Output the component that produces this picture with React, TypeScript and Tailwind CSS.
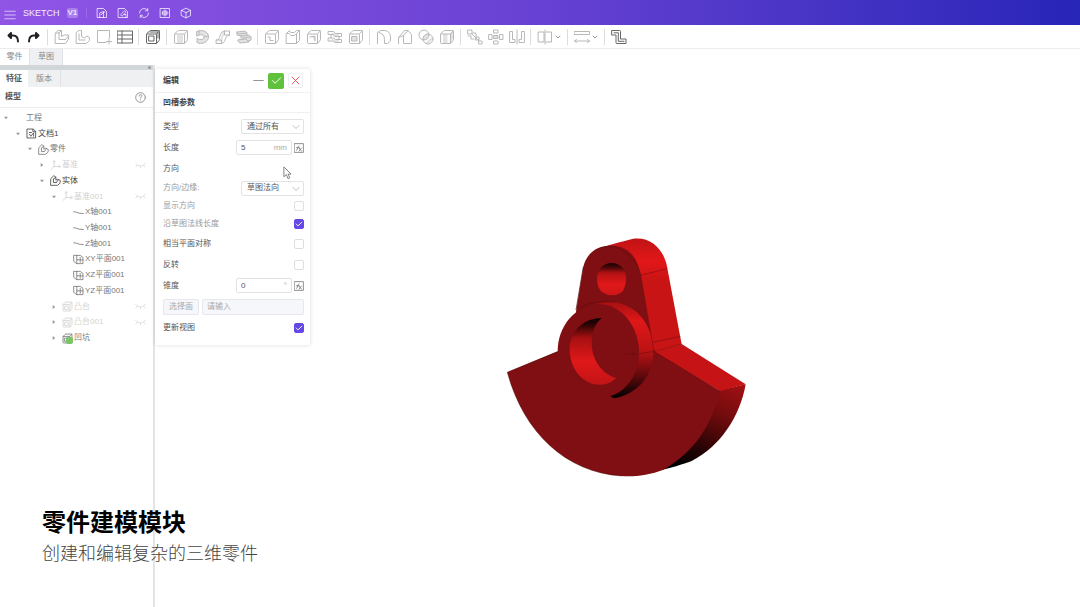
import React, { useState } from 'react';

type IconProps = {
  d: string;
  fill?: string;
  className?: string;
  width?: number;
};

const Icon: React.FC<IconProps> = ({
  d,
  fill,
  className = 'size-4',
  width = 1,
}) => (
  <svg
    viewBox="0 0 16 16"
    className={`shrink-0 ${className}`}
    fill="none"
    stroke="currentColor"
    strokeWidth={width}
    strokeLinecap="round"
    strokeLinejoin="round"
    aria-hidden="true"
  >
    {fill && <path d={fill} fill="currentColor" stroke="none" opacity="0.4" />}
    <path d={d} />
  </svg>
);

type Tool = {
  name: string;
  d: string;
  fill?: string;
  dark?: boolean;
  menu?: boolean;
  width?: number;
};

const cube =
  'M1.500 5.500q0-1 1-1.500l2-2q.500-.500 1-.500h8q1 0 1 1v8q0 .500-.500 1l-2 2.500q-.500.500-1 .500h-8.500q-1 0-1-1zM1.800 5h9q.700 0 .700.700v8.500M11.300 5l3-3.200';

const toolGroups: Tool[][] = [
  [
    {
      name: '新建实体',
      d: 'M1.500 4l2.500-2.500h3.500v6l3-1.500h4v4l-3 4.500h-10zM1.500 4h3.500l2.500-2.500M5 4v6.500h6.500M11.500 10.500l3-3.500',
    },
    {
      name: '新建零件',
      d: 'M1.500 3.500l2-2h3v6l3 1.500 2.500-2 2.500 1.500v3l-3 3h-10zM4 5v6h6',
    },
    { name: '新建草图', d: 'M10 13.500H1.500v-12h12V9M10.500 12.500h5M13 10v5' },
    {
      name: '表格',
      d: 'M.500 2h15v12h-15zM.500 6h15M.500 10h15M5 2v12',
      dark: true,
    },
  ],
  [
    {
      name: '包围盒',
      d: `${cube}M4 7h5v5H4zM5 3h8v6`,
      dark: true,
    },
  ],
  [
    { name: '拉伸', d: cube, fill: 'M4 6h6v8H4z' },
    {
      name: '旋转',
      d: 'M3 2.500C10-.500 15 4 14.500 8.500S8 16 3 13.500v-4c4 2 7 1 7-1.500S7 5 3 7zM5 1.500v4M14 7l-4 1',
      fill: 'M3 2.500C10-.500 15 4 14.500 8.500S8 16 3 13.500v-4c4 2 7 1 7-1.500S7 5 3 7z',
    },
    {
      name: '扫掠',
      d: 'M1.500 11c5 0 2-7.500 7.500-9h5.500v4.500c-6 0-2.500 7-8 8h-5zM9.500 2v4h5M1.500 11h5v3',
      fill: 'M5 11c2-1 1-7 4-9h1v4c-4 2-1 7-4 8z',
    },
    {
      name: '放样',
      d: 'M1 3l8-1 2 2-8 1zM5 7l8-1 2 2-8 1zM2 11l8-1 3 3-9 1zM1 3v3l4 1M11 4v2M15 8v3l-3 1',
      fill: 'M1 3l8-1 2 4 4 2v3l-2 2-9 1-2-3 3-4-4-1z',
    },
  ],
  [
    { name: '凹槽', d: `${cube}M4 8h2v3.500h3` },
    { name: '旋转槽', d: 'M1.500 4.500l3-3 1 2h4l2-2h3v10l-3 3h-10zM1.500 4.500H4l2 2h3.500l2-2v10M11.500 4.500l3-3' },
    { name: '孔', d: `${cube}M4 8l5-1v5`, fill: 'M5 7l4 5V7z' },
    {
      name: '螺纹',
      d: 'M1.500 2.500h5l2 2h6v3H8l-2-2H1.500zM1.500 9h5l2 1.500h6v3H8L6 12H1.500zM4 5.500V9M12 7.500v3',
      fill: 'M4 4h8v4H8L4 5zM4 10l8 1v2H8z',
    },
    { name: '抽壳', d: `${cube}M4 7.500h5v4.500H4z`, fill: 'M4 7.500h5v4.500H4z' },
  ],
  [
    { name: '圆角', d: 'M1.500 14.500v-11l3-2h3.500c4 0 6.500 3 6.500 6.500v4l-3 2.500h-3v-4c0-4-2-6-5.500-7' },
    { name: '倒角', d: 'M1.500 14.500v-6l6-7h3.500l3.500 4v9h-8v-8M1.500 8.500l5-2M6.500 6.500l4.500-5' },
    {
      name: '布尔',
      d: 'M11 6a5 5 0 1 1-10 0 5 5 0 0 1 10 0M15 10a5 5 0 1 1-10 0 5 5 0 0 1 10 0',
      fill: 'M11 6a5 5 0 0 1-6 5 5 5 0 0 1 6-6zM15 10l-5 5-3-1 7-6z',
    },
    { name: '加厚', d: cube, fill: 'M4 5h4.500v9H4zM11 5l3-3v8l-3 4z' },
  ],
  [
    {
      name: '线性阵列',
      d: 'M1 1h4v4H1zM6 4h3v4M1 7h3v3h3M9 8h3v3H9zM12 12h3v3h-3zM5 5l7 7',
    },
    {
      name: '圆形阵列',
      d: 'M6 1h4v3H6zM6 6.500h4v3H6zM6 12h4v3H6zM1 5.500h3v5H1zM12 5.500h3v5h-3z',
      fill: 'M6 6.500h4v3H6z',
    },
    { name: '镜像', d: 'M1 2.500h2.500v8H6v3H1zM15 2.500h-2.500v8H10v3h5zM8 1v14' },
  ],
  [{ name: '基准面', d: 'M1.500 3h5.500v10H1.500zM9 3h5.500v10H9M8 1v14', menu: true }],
  [
    {
      name: '测量',
      d: 'M.500 2.500h15v3H.500zM.500 12h15M2.500 10.500L.500 12l2 1.500M13.500 10.500l2 1.500-2 1.500',
      menu: true,
    },
  ],
  [
    {
      name: '钣金',
      d: 'M1 1.500h7.500q1 0 1 1v7.500H15v4.500H6q-1 0-1-1V6H1zM3 3.800h4.300v8.500H13',
      dark: true,
    },
  ],
];

const headerIcons: Tool[] = [
  { name: '保存', d: 'M2 2h8l4 4v8H2zM5 14V8l5-2v8M7 10l5-4' },
  { name: '另存', d: 'M2 2h8l4 4v8H2zM5 10l5-5 2 2-5 5zM9 10h3v4' },
  { name: '刷新', d: 'M2 8a6 6 0 0 1 10.500-4M14 8a6 6 0 0 1-10.500 4M13 2v3h-3M3 14v-3h3' },
  { name: '截图', d: 'M2 2h12v12H2zM5.500 5.500h5v5h-5zM8 4v8M4 8h8' },
  { name: '三维', d: 'M2 4.500l6-3 6 3v7l-6 3-6-3zM2 4.500l6 3 6-3M8 7.500v7' },
];

const docIcon = 'M2 1.500h8.500L14 5v9.500H2zM5 6.500h3M5 9l2 3 4-5v5M10 2v3.500h4';
const partIcon =
  'M1.500 5l4-4 3 2v4.500l3-1.500 3.500 2-.500 4-3.500 3h-9.500zM5 6v5h4M5 6l3.500-3M9 11l3-3.500';
const axesIcon = 'M6 1v8.500M6 9.500h9M6 9.500l-4.500 4M12.500 7.500l2.500 2-2.500 2M4.500 3L6 1l1.500 2';
const axisIcon = 'M1 7l4 .5L9 9l6 .5';
const planeIcon = 'M1.500 2h9l4 3v9h-9l-4-3zM5.500 2v6.500h9M10.500 5v7M5.500 8.500V14';
const bossIcon = `${cube}M4 7.500h5v4.500H4z`;

type TreeNode = {
  label: string;
  depth: string;
  icon?: string;
  tone: 'dark' | 'mid' | 'faint';
  arrow?: 'open' | 'closed';
  hidden?: boolean;
  green?: boolean;
};

const treeNodes: TreeNode[] = [
  { label: '工程', depth: 'pl-0', tone: 'mid', arrow: 'open' },
  { label: '文档1', depth: 'pl-3', icon: docIcon, tone: 'dark', arrow: 'open' },
  { label: '零件', depth: 'pl-6', icon: partIcon, tone: 'mid', arrow: 'open' },
  { label: '基准', depth: 'pl-9', icon: axesIcon, tone: 'faint', arrow: 'closed', hidden: true },
  { label: '实体', depth: 'pl-9', icon: partIcon, tone: 'dark', arrow: 'open' },
  { label: '基准001', depth: 'pl-12', icon: axesIcon, tone: 'faint', arrow: 'open', hidden: true },
  { label: 'X轴001', depth: 'pl-[59px]', icon: axisIcon, tone: 'mid' },
  { label: 'Y轴001', depth: 'pl-[59px]', icon: axisIcon, tone: 'mid' },
  { label: 'Z轴001', depth: 'pl-[59px]', icon: axisIcon, tone: 'mid' },
  { label: 'XY平面001', depth: 'pl-[59px]', icon: planeIcon, tone: 'mid' },
  { label: 'XZ平面001', depth: 'pl-[59px]', icon: planeIcon, tone: 'mid' },
  { label: 'YZ平面001', depth: 'pl-[59px]', icon: planeIcon, tone: 'mid' },
  { label: '凸台', depth: 'pl-12', icon: bossIcon, tone: 'faint', arrow: 'closed', hidden: true },
  { label: '凸台001', depth: 'pl-12', icon: bossIcon, tone: 'faint', arrow: 'closed', hidden: true },
  { label: '凹坑', depth: 'pl-12', icon: bossIcon, tone: 'mid', arrow: 'closed', green: true },
];

const tones = {
  dark: 'text-[#444]',
  mid: 'text-[#777]',
  faint: 'text-[#d2d2d2]',
};

const TreeRow: React.FC<{ node: TreeNode }> = ({ node }) => (
  <li
    className={`flex flex-1 items-center pr-[7px] ${node.depth} ${tones[node.tone]}`}
  >
    <span className="flex w-3 shrink-0 justify-center text-[#999]">
      {node.arrow && (
        <svg viewBox="0 0 6 6" className="size-1" fill="currentColor">
          <path d={node.arrow === 'open' ? 'M0 1h6L3 5z' : 'M1 0v6l4-3z'} />
        </svg>
      )}
    </span>
    <span className="relative ml-0.5 flex w-3 shrink-0 items-center">
      {node.icon && <Icon d={node.icon} className="size-[11px]" width={1.2} />}
      {node.green && (
        <span className="absolute right-px bottom-0 size-[7px] rounded-xs bg-[#7cc46a]" />
      )}
    </span>
    <span className="whitespace-nowrap">{node.label}</span>
    {node.hidden && (
      <Icon
        d="M1 5c4 5 10 5 14 0M3 8l-1.500 2M13 8l1.500 2M8 9v2.500"
        className="ml-auto size-[11px]"
      />
    )}
  </li>
);

const Row: React.FC<{
  label: string;
  htmlFor?: string;
  faint?: boolean;
  children?: React.ReactNode;
}> = ({ label, htmlFor, faint, children }) => (
  <div
    className={`flex items-center justify-between ${
      faint ? 'h-[18px] text-[#999]' : 'h-[21px] text-[#555]'
    }`}
  >
    {htmlFor ? <label htmlFor={htmlFor}>{label}</label> : <span>{label}</span>}
    {children}
  </div>
);

const Select: React.FC<{ id: string; options: string[] }> = ({ id, options }) => (
  <div className="relative">
    <select
      id={id}
      className="h-[15px] w-[63px] appearance-none rounded-xs border border-[#e3e3e3] bg-white pl-[5px] text-[#555]"
    >
      {options.map((option) => (
        <option key={option}>{option}</option>
      ))}
    </select>
    <Icon
      d="M2 5l6 6 6-6"
      className="pointer-events-none absolute top-1 right-1 size-2 text-[#aaa]"
      width={1.5}
    />
  </div>
);

const Measure: React.FC<{ id: string; initial: string; unit: string }> = ({
  id,
  initial,
  unit,
}) => {
  const [value, setValue] = useState(initial);
  return (
    <div className="flex items-center gap-0.5">
      <div className="flex h-[15px] w-14 items-center rounded-xs border border-[#e3e3e3] px-1">
        <input
          id={id}
          value={value}
          onChange={(event) => setValue(event.target.value)}
          className="w-full min-w-0 text-[#555] outline-none"
        />
        <span className="text-[#aaa]">{unit}</span>
      </div>
      <button type="button" aria-label="公式" className="text-[#777]">
        <Icon
          d="M1 1h14v14H1zM4 12c2 0 2-8 4-8M4 7.500h4.500M8 8l4 5M12 8l-4 5"
          className="size-[10px]"
          width={1.3}
        />
      </button>
    </div>
  );
};

const Check: React.FC<{ id: string; initial?: boolean }> = ({
  id,
  initial = false,
}) => {
  const [checked, setChecked] = useState(initial);
  return (
    <span className="relative flex">
      <input
        id={id}
        type="checkbox"
        checked={checked}
        onChange={(event) => setChecked(event.target.checked)}
        className="size-[10px] appearance-none rounded-xs border border-[#dedede] bg-white checked:border-[#6648e6] checked:bg-[#6648e6]"
      />
      {checked && (
        <Icon
          d="M3.500 8l3 3 6-6"
          className="pointer-events-none absolute inset-0 size-[10px] text-white"
          width={1.5}
        />
      )}
    </span>
  );
};

const EditPanel = () => (
  <form className="mt-1 w-[155px] shrink-0 self-start rounded-xs bg-white pb-[7px] shadow-[0_0_4px_rgba(0,0,0,0.15)]">
    <div className="flex h-6 items-center border-b border-[#f0f0f0] pr-[7px] pl-2">
      <h2 className="mr-auto font-bold text-[#444]">编辑</h2>
      <button type="button" aria-label="最小化" className="mr-1 text-[#888]">
        <Icon d="M1 8h14" className="size-[11px]" width={1.3} />
      </button>
      <button
        type="button"
        aria-label="确定"
        className="mr-1 flex size-4 items-center justify-center rounded-xs bg-[#5fc13c] text-white"
      >
        <Icon d="M2 8l4 4 8-8" className="size-[11px]" width={1.4} />
      </button>
      <button
        type="button"
        aria-label="取消"
        className="flex size-[15px] items-center justify-center rounded-xs border border-[#eee] text-[#dc5a5a]"
      >
        <Icon d="M3 3l10 10M13 3L3 13" className="size-[11px]" width={1.4} />
      </button>
    </div>
    <h3 className="flex h-5 items-center border-b border-[#f0f0f0] px-2 font-bold text-[#444]">
      凹槽参数
    </h3>
    <div className="pt-[3px] pr-[6px] pl-2">
      <Row label="类型" htmlFor="type">
        <Select id="type" options={['通过所有', '尺寸']} />
      </Row>
      <Row label="长度" htmlFor="length">
        <Measure id="length" initial="5" unit="mm" />
      </Row>
      <Row label="方向" />
      <Row label="方向/边缘:" htmlFor="direction" faint>
        <Select id="direction" options={['草图法向', '自定义']} />
      </Row>
      <Row label="显示方向" htmlFor="show" faint>
        <Check id="show" />
      </Row>
      <Row label="沿草图法线长度" htmlFor="normal" faint>
        <Check id="normal" initial />
      </Row>
      <Row label="相当平面对称" htmlFor="symmetric">
        <Check id="symmetric" />
      </Row>
      <Row label="反转" htmlFor="reverse">
        <Check id="reverse" />
      </Row>
      <Row label="锥度" htmlFor="taper">
        <Measure id="taper" initial="0" unit="°" />
      </Row>
      <div className="flex h-[21px] items-center gap-[3px]">
        <button
          type="button"
          className="h-4 w-9 shrink-0 rounded-xs border border-[#e6e8ec] bg-[#f5f7fa] text-[#aaa]"
        >
          选择面
        </button>
        <input
          aria-label="选择面"
          placeholder="请输入"
          className="h-4 w-full min-w-0 rounded-xs border border-[#e6e8ec] bg-[#f5f7fa] px-1 placeholder:text-[#aaa]"
        />
      </div>
      <Row label="更新视图" htmlFor="update">
        <Check id="update" initial />
      </Row>
    </div>
  </form>
);

const Model = () => (
  <svg
    viewBox="0 0 810 795"
    className="w-[270px] shrink-0"
    role="img"
    aria-label="曲柄零件"
  >
    <defs>
      <linearGradient id="arm" x1="0" y1="0" x2="0" y2="1">
        <stop offset="0" stopColor="#c01315" />
        <stop offset="0.2" stopColor="#e21718" />
        <stop offset="0.38" stopColor="#c81415" />
        <stop offset="1" stopColor="#c81415" />
      </linearGradient>
      <linearGradient id="rim" x1="0.9" y1="0" x2="0.35" y2="1">
        <stop offset="0" stopColor="#a01012" />
        <stop offset="0.35" stopColor="#700b0d" />
        <stop offset="0.75" stopColor="#250304" />
        <stop offset="1" stopColor="#000" />
      </linearGradient>
      <linearGradient id="boss" x1="0" y1="0" x2="0" y2="1">
        <stop offset="0" stopColor="#a51012" />
        <stop offset="0.2" stopColor="#e01718" />
        <stop offset="0.5" stopColor="#bd1315" />
        <stop offset="0.75" stopColor="#650a0c" />
        <stop offset="1" stopColor="#000" />
      </linearGradient>
      <linearGradient id="bore" x1="0" y1="0" x2="0" y2="1">
        <stop offset="0" stopColor="#0c0000" />
        <stop offset="0.1" stopColor="#2c0405" />
        <stop offset="0.3" stopColor="#a81012" />
        <stop offset="0.65" stopColor="#e01819" />
        <stop offset="1" stopColor="#c21416" />
      </linearGradient>
      <linearGradient id="pin" x1="0" y1="0" x2="0" y2="1">
        <stop offset="0" stopColor="#140101" />
        <stop offset="0.14" stopColor="#4a0709" />
        <stop offset="0.32" stopColor="#b51214" />
        <stop offset="0.65" stopColor="#e01819" />
        <stop offset="1" stopColor="#cf1517" />
      </linearGradient>
    </defs>
    <path
      d="M310 82C325 70 345 62 430 41C490 34 525 82 532 130L575 358L490 380L440 200Z"
      fill="url(#arm)"
    />
    <path
      d="M258 260L280 125C290 82 325 60 370 62C425 66 444 108 452 150L492 385L300 420Z"
      fill="#7f0f12"
    />
    <path
      d="M680 498L767 478C750 575 690 665 605 708C580 718 540 729 500 739L560 640Z"
      fill="url(#rim)"
    />
    <path
      d="M52 442L215 374L490 374L690 498C665 600 615 680 520 734C480 750 430 756 395 753C225 742 100 620 52 442Z"
      fill="#7f0f12"
    />
    <path d="M492 379L575 357L767 478L690 498Z" fill="#c61315" />
    <path
      d="M320 236C350 228 372 228 395 236C450 252 490 310 490 380C490 455 440 508 372 520C325 500 310 300 320 236Z"
      fill="url(#boss)"
    />
    <path
      d="M325 237C395 237 447 305 447 382C447 455 400 519 325 519C255 519 203 450 203 378C203 305 255 240 325 237Z"
      fill="#7f0f12"
    />
    <path
      d="M335 279C278 280 239 320 239 374C239 432 280 480 332 479C352 478 368 470 379 459C335 449 305 402 305 355C305 320 316 295 335 279Z"
      fill="url(#bore)"
    />
    <path
      d="M365 114C390 114 408 134 408 158C408 176 404 190 396 202Q366 220 336 202C326 192 321 178 321 160C321 134 340 114 365 114Z"
      fill="url(#pin)"
    />
    <g fill="none" stroke="#4f090b" strokeWidth="2">
      <path
        d="M320 72C390 45 440 100 452 150L492 379L690 498"
        opacity="0.5"
      />
      <path d="M280 125L258 255M203 380L52 442" />
      <path
        d="M452 151L532 131M488 352L572 334M447 386L492 379L575 357"
        opacity="0.6"
      />
      <path d="M270 248C300 233 335 228 375 231" opacity="0.7" />
      <path d="M52 442C100 620 225 742 395 753" opacity="0.7" />
      <path d="M410 387h32M430 380v14" opacity="0.4" />
    </g>
  </svg>
);

const App = () => {
  const [workbench, setWorkbench] = useState('零件');
  const [view, setView] = useState('特征');

  return (
    <div className="relative flex min-h-screen flex-col overflow-hidden bg-white font-['Liberation_Sans','Noto_Sans_CJK_SC',sans-serif] text-[8px] leading-3">
      <header className="flex h-[25px] items-center bg-linear-to-r from-[#9155e6] via-[#6741d3] to-[#2724b8] pl-1 text-white/80">
        <button type="button" aria-label="菜单" className="mt-1">
          <Icon d="M1 3h14M1 8h14M1 13h14" className="size-3" />
        </button>
        <h1 className="ml-[7px] text-[9px] text-white/90">SKETCH</h1>
        <span className="ml-[7px] rounded-xs bg-white/25 px-px leading-[10px] font-bold">
          V1
        </span>
        <span className="ml-2 h-2.5 w-px bg-white/15" />
        <nav className="ml-[9px] flex gap-[9px]">
          {headerIcons.map((tool) => (
            <button key={tool.name} type="button" aria-label={tool.name}>
              <Icon d={tool.d} className="size-3" width={1.2} />
            </button>
          ))}
        </nav>
      </header>

      <div className="flex h-6 items-center gap-[5px] border-b border-[#ececec] pl-[5px] text-[#b8b8b8]">
        <button type="button" aria-label="撤销" className="text-[#222]">
          <Icon
            d="M4 6.500h4c3 0 5 2 5 6M6 4L3.500 6.500 6 9z"
            className="size-4"
            width={2}
          />
        </button>
        <button type="button" aria-label="重做" className="text-[#222]">
          <Icon
            d="M12 6.500H8c-3 0-5 2-5 6M10 4l2.500 2.500L10 9z"
            className="size-4"
            width={2}
          />
        </button>
        {toolGroups.map((group) => (
          <React.Fragment key={group[0].name}>
            <span className="h-4 w-0.5 border-l border-[#dcdcdc]" />
            {group.map((tool) => (
              <button
                key={tool.name}
                type="button"
                aria-label={tool.name}
                className={`flex items-center gap-px ${tool.dark ? 'text-[#666]' : ''}`}
              >
                <Icon d={tool.d} fill={tool.fill} width={tool.width} />
                {tool.menu && (
                  <Icon d="M4 6l4 4 4-4" className="size-2 text-[#999]" width={2} />
                )}
              </button>
            ))}
          </React.Fragment>
        ))}
      </div>

      <nav className="flex h-4 text-[#888]">
        {['零件', '草图'].map((name) => (
          <button
            key={name}
            type="button"
            onClick={() => setWorkbench(name)}
            className={
              workbench === name
                ? 'w-[29px]'
                : 'w-[34px] border-x border-[#dfe1e4] bg-[#eef0f3]'
            }
          >
            {name}
          </button>
        ))}
      </nav>

      <main className="flex flex-1">
        <aside className="w-[155px] shrink-0 border-r-2 border-[#e4e4e4]">
          <div className="flex h-[5px] items-center justify-end bg-[#d1d6d9] pr-0.5">
            <span className="size-[3px] rounded-full bg-[#999]" />
          </div>
          <nav className="flex h-[17px] bg-[#eef0f2]">
            {['特征', '版本'].map((name) => (
              <button
                key={name}
                type="button"
                onClick={() => setView(name)}
                className={
                  view === name
                    ? 'w-7 bg-white font-bold text-[#555]'
                    : 'w-[33px] border-r border-[#dfe1e4] text-[#888]'
                }
              >
                {name}
              </button>
            ))}
          </nav>
          <div className="flex h-[21px] items-center justify-between border-b border-[#ececec] pr-[7px] pl-[5px]">
            <h2 className="font-bold text-[#555]">模型</h2>
            <button type="button" aria-label="帮助" className="text-[#888]">
              <Icon
                d="M15 8A7 7 0 1 1 1 8a7 7 0 0 1 14 0M6 6c0-3 4.500-2.500 4 0-.300 1.200-2 1.200-2 3M8 11.500v.2"
                className="size-[11px]"
                width={1.3}
              />
            </button>
          </div>
          <ul className="mt-0.5 flex h-[236px] flex-col">
            {treeNodes.map((node) => (
              <TreeRow key={node.label} node={node} />
            ))}
          </ul>
        </aside>

        <EditPanel />

        <section className="flex flex-1 items-start pt-40 pl-[180px]">
          <Model />
        </section>
      </main>

      <svg
        viewBox="0 0 10 15"
        className="pointer-events-none absolute top-[166px] left-[283px] w-[9px]"
        fill="#fff"
        stroke="#777"
        strokeWidth="1"
        aria-hidden="true"
      >
        <path d="M1 1v11l2.800-2.500L5.500 14l2-.8-1.800-4.200H9z" />
      </svg>

      <div className="pointer-events-none absolute bottom-[38px] left-[42px]">
        <p className="text-2xl leading-8 font-bold text-black">零件建模模块</p>
        <p className="text-lg leading-[30px] font-light text-[#444]">
          创建和编辑复杂的三维零件
        </p>
      </div>
    </div>
  );
};

export default App;
